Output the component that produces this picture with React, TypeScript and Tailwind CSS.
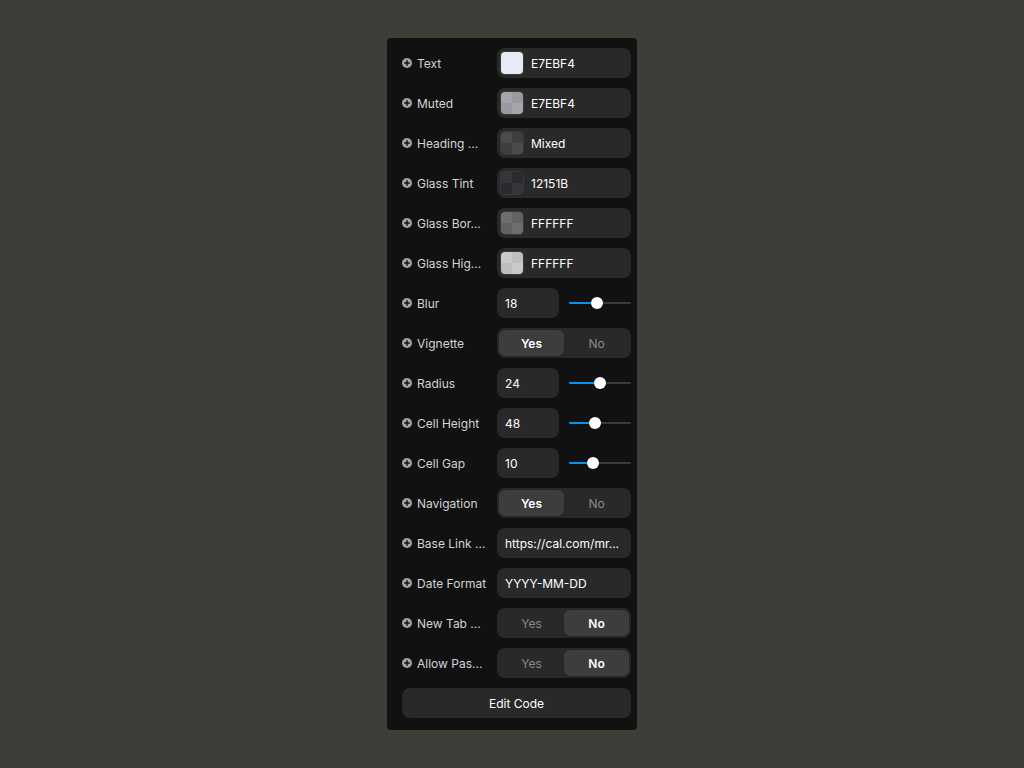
import React from "react";

const font = { fontFamily: "Inter, 'Noto Sans', sans-serif" };

function PlusIcon() {
  return (
    <svg width="10" height="10" viewBox="0 0 10 10" className="shrink-0">
      <circle cx="5" cy="5" r="5" fill="#a3a3a3" />
      <rect x="2.3" y="4.25" width="5.4" height="1.5" fill="#111111" />
      <rect x="4.25" y="2.3" width="1.5" height="5.4" fill="#111111" />
    </svg>
  );
}

function Label({ text }: { text: string }) {
  return (
    <div className="flex items-center gap-[5px] w-[95px] shrink-0 pr-[6px] min-w-0">
      <PlusIcon />
      <span className="text-[12px] text-[#d4d4d4] whitespace-nowrap pt-[1px]">{text}</span>
    </div>
  );
}

function Swatch({ a, b }: { a: string; b: string }) {
  return (
    <div className="w-[22px] h-[22px] rounded-[4px] overflow-hidden grid grid-cols-2 grid-rows-2 shrink-0 ring-1 ring-[#ffffff14]">
      <div style={{ background: a }} />
      <div style={{ background: b }} />
      <div style={{ background: b }} />
      <div style={{ background: a }} />
    </div>
  );
}

function ColorRow({ label, value, a, b }: { label: string; value: string; a: string; b: string }) {
  return (
    <div className="flex items-center h-[30px]">
      <Label text={label} />
      <div className="flex-1 h-[30px] bg-[#292929] rounded-[8px] flex items-center pl-[4px] gap-[8px]">
        <Swatch a={a} b={b} />
        <span className="text-[12px] text-white pt-[1px]">{value}</span>
      </div>
    </div>
  );
}

function SliderRow({ label, value, pos }: { label: string; value: string; pos: number }) {
  return (
    <div className="flex items-center h-[30px]">
      <Label text={label} />
      <div className="w-[62px] h-[30px] bg-[#292929] rounded-[8px] flex items-center px-[8px]">
        <span className="text-[12px] text-white pt-[1px]">{value}</span>
      </div>
      <div className="ml-[10px] flex-1 relative h-[30px] flex items-center">
        <div className="w-full h-[2px] bg-[#3a3a3a] rounded-full" />
        <div className="absolute left-0 h-[2px] bg-[#0a91e8] rounded-full" style={{ width: pos }} />
        <div
          className="absolute w-[12px] h-[12px] rounded-full bg-white shadow"
          style={{ left: pos - 6 }}
        />
      </div>
    </div>
  );
}

function ToggleRow({ label, yes }: { label: string; yes: boolean }) {
  const on = "bg-[#3d3d3d] text-white font-semibold shadow-sm";
  const off = "text-[#8a8a8a]";
  return (
    <div className="flex items-center h-[30px]">
      <Label text={label} />
      <div className="flex-1 h-[30px] bg-[#292929] rounded-[8px] p-[2px] grid grid-cols-2">
        <div className={`rounded-[6px] flex items-center justify-center text-[12px] pt-[1px] ${yes ? on : off}`}>Yes</div>
        <div className={`rounded-[6px] flex items-center justify-center text-[12px] pt-[1px] ${!yes ? on : off}`}>No</div>
      </div>
    </div>
  );
}

function TextRow({ label, value }: { label: string; value: string }) {
  return (
    <div className="flex items-center h-[30px]">
      <Label text={label} />
      <div className="flex-1 min-w-0 h-[30px] bg-[#292929] rounded-[8px] flex items-center px-[8px]">
        <span className="text-[12px] text-white whitespace-nowrap pt-[1px]">{value}</span>
      </div>
    </div>
  );
}

export default function App() {
  return (
    <div className="w-[1024px] h-[768px] bg-[#3c3d37] flex justify-center pt-[38px]" style={font}>
      <div className="w-[250px] h-[692px] bg-[#111111] rounded-[4px] pl-[15px] pr-[6px] pt-[10px] flex flex-col gap-[10px]">
        <ColorRow label="Text" value="E7EBF4" a="#e7ebf4" b="#e7ebf4" />
        <ColorRow label="Muted" value="E7EBF4" a="#a4a6ab" b="#999a9f" />
        <ColorRow label="Heading ..." value="Mixed" a="#4b4b4b" b="#3e3e3e" />
        <ColorRow label="Glass Tint" value="12151B" a="#34363a" b="#2a2b2f" />
        <ColorRow label="Glass Bor..." value="FFFFFF" a="#6e6e6e" b="#626262" />
        <ColorRow label="Glass Hig..." value="FFFFFF" a="#cacaca" b="#bebebe" />
        <SliderRow label="Blur" value="18" pos={28} />
        <ToggleRow label="Vignette" yes={true} />
        <SliderRow label="Radius" value="24" pos={31} />
        <SliderRow label="Cell Height" value="48" pos={26} />
        <SliderRow label="Cell Gap" value="10" pos={24} />
        <ToggleRow label="Navigation" yes={true} />
        <TextRow label="Base Link ..." value="https://cal.com/mr..." />
        <TextRow label="Date Format" value="YYYY-MM-DD" />
        <ToggleRow label="New Tab ..." yes={false} />
        <ToggleRow label="Allow Pas..." yes={false} />
        <div className="h-[30px] bg-[#292929] rounded-[8px] flex items-center justify-center text-[12px] text-white pt-[1px]">
          Edit Code
        </div>
      </div>
    </div>
  );
}
